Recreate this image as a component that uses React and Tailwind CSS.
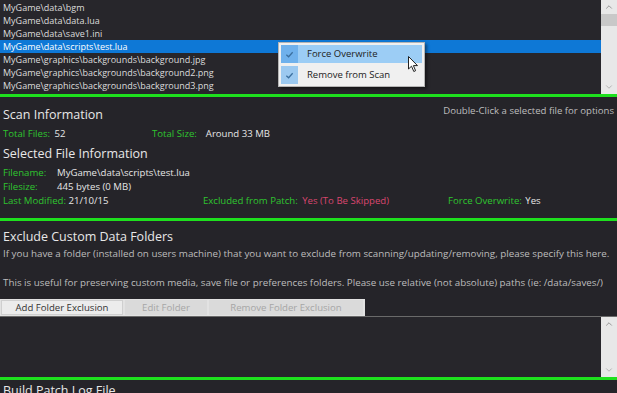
import { ChevronUp, ChevronDown } from "lucide-react";

const files = [
    "MyGame\\data\\bgm",
    "MyGame\\data\\data.lua",
    "MyGame\\data\\save1.ini",
    "MyGame\\data\\scripts\\test.lua",
    "MyGame\\graphics\\backgrounds\\background.jpg",
    "MyGame\\graphics\\backgrounds\\background2.png",
    "MyGame\\graphics\\backgrounds\\background3.png",
];

function Scrollbar({ thumb }) {
    return (
        <div className="w-[16px] bg-[#e8e8e8] flex flex-col items-center justify-between py-[2px]">
            <div className="flex flex-col items-center w-full">
                <ChevronUp size={10} strokeWidth={2} className="text-[#888]" />
                {thumb && <div className="w-full h-[12px] bg-[#c8c8c8] mt-[2px]" />}
            </div>
            <ChevronDown size={10} strokeWidth={2} className="text-[#aaa]" />
        </div>
    );
}

function Check() {
    return (
        <svg width="9" height="9" viewBox="0 0 10 10">
            <path d="M1.5 5.2 L4 7.5 L8.5 2.5" fill="none" stroke="#3b6f9e" strokeWidth="1.4" />
        </svg>
    );
}

export default function App() {
    const label = "text-[#2fc42f]";
    const value = "text-[#e6e6e6]";

    return (
        <div className="w-[617px] h-[393px] overflow-hidden bg-[#252429] font-['Open_Sans',sans-serif] text-[#e0e0e0] relative">

            {/* file list */}
            <div className="flex h-[94px] bg-[#27262b]">
                <div className="flex-1 pt-[1px]">
                    {files.map((f, i) => (
                        <div
                            key={f}
                            className={
                                "h-[13px] leading-[13px] text-[9px] pl-[3px] " +
                                (i === 3 ? "bg-[#0e78d6] text-white" : "text-[#dcdcdc]")
                            }
                        >
                            {f}
                        </div>
                    ))}
                </div>
                <Scrollbar thumb />
            </div>

            <div className="h-[3px] bg-[#1ee01e]" />

            {/* scan info */}
            <div className="h-[121px] px-[3px] pt-[9px] text-[9.6px]">
                <div className="flex justify-between items-start">
                    <h2 className="text-[12.5px] leading-[18px] text-[#e8e8e8]">Scan Information</h2>
                    <span className="text-[9.6px] text-[#bdbdbd] -mt-[2px]">Double-Click a selected file for options</span>
                </div>
                <div className="flex mt-[3px] leading-[14px]">
                    <span className="w-[149px]"><span className={label}>Total Files:</span> <span className={value + " ml-[2px]"}>52</span></span>
                    <span className={label}>Total Size:</span>
                    <span className={value + " ml-[9px]"}>Around 33 MB</span>
                </div>
                <h2 className="text-[12.5px] leading-[18px] text-[#e8e8e8] mt-[4px]">Selected File Information</h2>
                <div className="flex leading-[14px] mt-[3px]">
                    <span className={label + " w-[54px]"}>Filename:</span>
                    <span className={value}>MyGame\data\scripts\test.lua</span>
                </div>
                <div className="flex leading-[14px]">
                    <span className={label + " w-[54px]"}>Filesize:</span>
                    <span className={value}>445 bytes (0 MB)</span>
                </div>
                <div className="flex leading-[14px]">
                    <span className="w-[200px]"><span className={label}>Last Modified:</span> <span className={value}>21/10/15</span></span>
                    <span className="w-[245px]"><span className={label}>Excluded from Patch:</span> <span className="text-[#d9466f] ml-[2px]">Yes (To Be Skipped)</span></span>
                    <span><span className={label}>Force Overwrite:</span> <span className={value + " ml-[1px]"}>Yes</span></span>
                </div>
            </div>

            <div className="h-[3px] bg-[#1ee01e]" />

            {/* exclude folders */}
            <div className="pt-[7px] text-[9.8px]">
                <h2 className="px-[3px] text-[12.5px] leading-[18px] text-[#e8e8e8]">Exclude Custom Data Folders</h2>
                <p className="px-[3px] text-[#bdbdbd] leading-[14px] mt-[1px] whitespace-nowrap">
                    If you have a folder (installed on users machine) that you want to exclude from scanning/updating/removing, please specify this here.
                </p>
                <p className="px-[3px] text-[#bdbdbd] leading-[14px] mt-[15px] whitespace-nowrap">
                    This is useful for preserving custom media, save file or preferences folders. Please use relative (not absolute) paths (ie: /data/saves/)
                </p>
                <div className="flex mt-[9px] h-[17px] w-[365px] bg-[#e2e2e2] pt-[1px] gap-[2px] pl-[1px]">
                    <button className="w-[122px] h-[15px] bg-[#ececec] border border-[#cfcfcf] text-[#333] text-[9.6px] leading-[13px]">Add Folder Exclusion</button>
                    <button className="w-[82px] h-[15px] bg-[#dadada] text-[#a6a6a6] text-[9.6px] leading-[15px]">Edit Folder</button>
                    <button className="w-[154px] h-[15px] bg-[#dadada] text-[#a6a6a6] text-[9.6px] leading-[15px]">Remove Folder Exclusion</button>
                </div>
                <div className="flex h-[61px] border-t border-[#6a6a6a] bg-[#27262b]">
                    <div className="flex-1" />
                    <Scrollbar />
                </div>
            </div>

            <div className="h-[3px] bg-[#1ee01e]" />
            <h2 className="px-[3px] pt-[2px] text-[12.5px] leading-[18px] text-[#e8e8e8]">Build Patch Log File</h2>

            {/* context menu */}
            <div className="absolute left-[278px] top-[42px] w-[147px] h-[45px] bg-[#f0f0f0] border border-[#b5b5b5] shadow-[2px_2px_3px_rgba(0,0,0,0.45)] p-[2px] text-[9.5px] text-[#222]">
                <div className="flex h-[18px] bg-[#9ccdf5] items-center">
                    <div className="w-[17px] h-full bg-[#6fb1ec] flex items-center justify-center"><Check /></div>
                    <span className="ml-[9px]">Force Overwrite</span>
                </div>
                <div className="flex h-[18px] mt-[3px] items-center">
                    <div className="w-[17px] h-full bg-[#9cc9f0] flex items-center justify-center"><Check /></div>
                    <span className="ml-[9px]">Remove from Scan</span>
                </div>
            </div>

            {/* cursor */}
            <svg className="absolute left-[408px] top-[56px]" width="11" height="17" viewBox="0 0 11 17">
                <path d="M0.5 0.5 L0.5 13 L3.5 10.2 L5.8 15.5 L7.6 14.7 L5.4 9.6 L9.5 9.6 Z" fill="#fff" stroke="#222" strokeWidth="1" />
            </svg>
        </div>
    );
}
